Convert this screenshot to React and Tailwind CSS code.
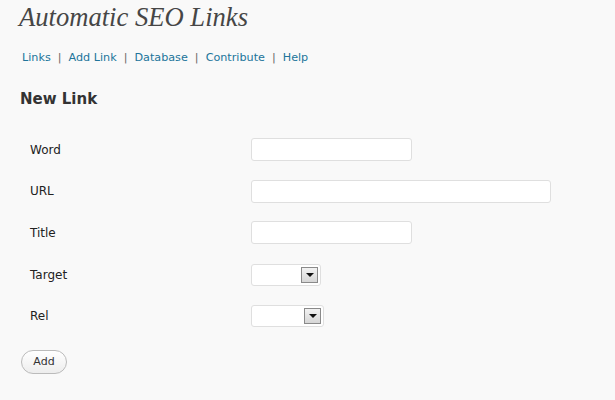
import React from "react";

function SelectBox({ width }) {
  return (
    <div className={`flex h-[22px] ${width} items-center justify-end rounded-[3px] border border-[#dfdfdf] bg-white pr-[2px]`}>
      <div className="flex h-[16px] w-[17px] items-center justify-center border border-[#8a8a8a] bg-gradient-to-b from-[#f2f2f2] to-[#d6d6d6]">
        <div className="h-0 w-0 border-x-[4px] border-t-[4px] border-x-transparent border-t-[#111]" />
      </div>
    </div>
  );
}

export default function App() {
  const rows = [
    { label: "Word", field: <div className="h-[23px] w-[161px] rounded-[3px] border border-[#dfdfdf] bg-white" /> },
    { label: "URL", field: <div className="h-[23px] w-[300px] rounded-[3px] border border-[#dfdfdf] bg-white" /> },
    { label: "Title", field: <div className="h-[23px] w-[161px] rounded-[3px] border border-[#dfdfdf] bg-white" /> },
    { label: "Target", field: <SelectBox width="w-[70px]" /> },
    { label: "Rel", field: <SelectBox width="w-[73px]" /> },
  ];

  return (
    <div className="h-[400px] w-[615px] overflow-hidden bg-[#f9f9f9] font-['DejaVu_Sans',Verdana,sans-serif] text-[#333]">
      <h1 className="pl-[19px] pt-[2px] font-['Liberation_Serif',Georgia,serif] text-[26.6px] italic leading-[30px] text-[#464646]">
        Automatic SEO Links
      </h1>

      <div className="mt-[19px] flex pl-[22px] text-[11.2px] leading-[14px] text-[#21759b]">
        <span>Links</span>
        <span className="px-[7px] text-[#666]">|</span>
        <span>Add Link</span>
        <span className="px-[7px] text-[#666]">|</span>
        <span>Database</span>
        <span className="px-[7px] text-[#666]">|</span>
        <span>Contribute</span>
        <span className="px-[7px] text-[#666]">|</span>
        <span>Help</span>
      </div>

      <h2 className="mt-[25px] pl-[20px] text-[15px] font-bold leading-[18px] text-[#333]">New Link</h2>

      <div className="mt-[21px] flex flex-col pl-[20px]">
        {rows.map((r) => (
          <div key={r.label} className="grid h-[41.6px] grid-cols-[231px_1fr] items-center">
            <span className="pl-[10px] text-[12px] text-[#222]">{r.label}</span>
            {r.field}
          </div>
        ))}
      </div>

      <div className="mt-[11px] pl-[21px]">
        <button className="h-[24px] w-[46px] rounded-full border border-[#bbb] bg-gradient-to-b from-white to-[#ededed] text-[11px] text-[#333]">
          Add
        </button>
      </div>
    </div>
  );
}
